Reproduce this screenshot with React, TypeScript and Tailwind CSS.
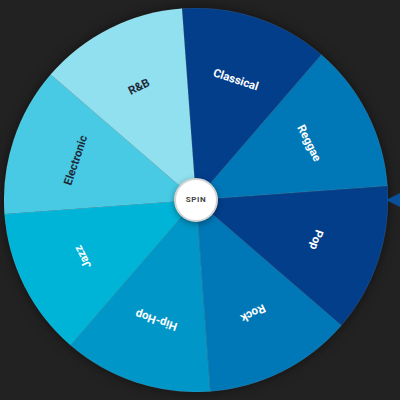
const segments = [
  { label: 'Classical', color: '#023e8a', text: '#ffffff' },
  { label: 'Reggae', color: '#0077b6', text: '#ffffff' },
  { label: 'Pop', color: '#023e8a', text: '#ffffff' },
  { label: 'Rock', color: '#0077b6', text: '#ffffff' },
  { label: 'Hip-Hop', color: '#0096c7', text: '#ffffff' },
  { label: 'Jazz', color: '#00b4d8', text: '#ffffff' },
  { label: 'Electronic', color: '#48cae4', text: '#1f2937' },
  { label: 'R&B', color: '#90e0ef', text: '#1f2937' },
];

const R = 192;
const OFFSET = -4.2; // wheel resting angle, degrees clockwise from top
const SLICE = 360 / segments.length;

const point = (deg: number, r: number) => {
  const rad = (deg * Math.PI) / 180;
  return [r * Math.sin(rad), -r * Math.cos(rad)];
};

const slicePath = (i: number) => {
  const a0 = OFFSET + i * SLICE;
  const [x0, y0] = point(a0, R);
  const [x1, y1] = point(a0 + SLICE, R);
  return `M0 0 L${x0} ${y0} A${R} ${R} 0 0 1 ${x1} ${y1} Z`;
};

const Wheel = () => (
  <svg width={384} height={384} viewBox="-192 -192 384 384" className="block">
    {segments.map((s, i) => (
      <path key={s.label} d={slicePath(i)} fill={s.color} stroke="rgba(255,255,255,0.08)" strokeWidth={1} />
    ))}
    {segments.map((s, i) => {
      const mid = OFFSET + i * SLICE + SLICE / 2;
      return (
        <text
          key={s.label}
          transform={`rotate(${mid}) translate(0 -127)`}
          textAnchor="middle"
          dominantBaseline="central"
          fill={s.text}
          fontSize={11.5}
          fontWeight={700}
          fontFamily="Roboto, 'Liberation Sans', sans-serif"
        >
          {s.label}
        </text>
      );
    })}
  </svg>
);

export default function App() {
  return (
    <div className="h-[400px] w-[400px] bg-[#222222] overflow-hidden">
      <div className="relative pl-1 pt-2">
        <div className="relative h-[384px] w-[384px] rounded-full shadow-[0_0_12px_rgba(0,0,0,0.5)]">
          <Wheel />
          <button className="absolute left-1/2 top-1/2 -translate-x-1/2 -translate-y-1/2 flex h-[44px] w-[44px] items-center justify-center rounded-full border-2 border-[#d4d4d4] bg-white text-[8px] font-bold tracking-[0.08em] text-[#444] shadow-[0_2px_6px_rgba(0,0,0,0.35)] font-['Roboto','Liberation_Sans',sans-serif]">
            SPIN
          </button>
        </div>
        {/* pointer on the right rim */}
        <div className="absolute right-0 top-[193px] h-0 w-0 border-y-[7px] border-r-[14px] border-y-transparent border-r-[#0a4f9a]" />
      </div>
    </div>
  );
}
